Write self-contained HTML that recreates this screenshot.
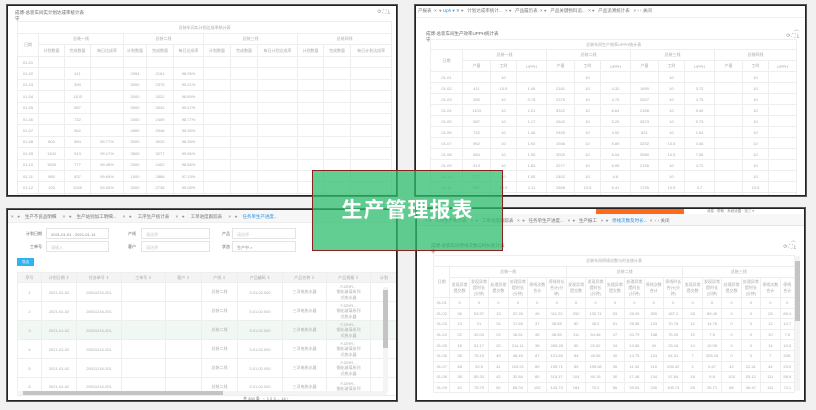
<!DOCTYPE html>
<html><head><meta charset="utf-8"><style>
*{margin:0;padding:0;box-sizing:border-box}
body{width:816px;height:410px;background:#f1f1f1;position:relative;overflow:hidden;font-family:"Liberation Sans","Noto Sans CJK SC",sans-serif;color:#999}
.p{position:absolute;background:#fff;border:1px solid #222;box-shadow:0 0 0 1px #555;overflow:hidden}
.a{position:absolute;white-space:nowrap}
table{border-collapse:collapse;table-layout:fixed;position:absolute;font-size:4px;color:#aaa}
td{border:1px solid #eee;text-align:center;overflow:hidden;white-space:nowrap}
.tab{position:absolute;font-size:4.5px;color:#777;white-space:nowrap}
.in{position:absolute;border:1px solid #e4e4e4;height:11px;font-size:4px;color:#ccc;padding:3px 4px}
#g{position:absolute;left:312px;top:170px;width:191px;height:81px;background:rgba(46,190,110,0.75);border:1px solid #8b2020;color:#fff;font-size:21px;font-weight:bold;text-align:center;line-height:79px;letter-spacing:1px;font-family:"Liberation Sans","Noto Sans CJK SC",sans-serif}
</style></head><body>

<!-- TL -->
<div class="p" style="left:7px;top:5px;width:390px;height:191px">
<div class="a" style="left:7px;top:4px;font-size:4.5px;color:#666">成博-总装车间实计划达成率统计表<br>守</div>
<div class="a" style="right:6px;top:3px;font-size:5px;color:#888">⟳ ⛶ ⤓</div>
<table style="left:9px;top:15px;width:374px">
<col style="width:21px"><col style="width:26px"><col style="width:26px"><col style="width:33px"><col style="width:23px"><col style="width:27px"><col style="width:30px"><col style="width:27px"><col style="width:27px"><col style="width:40px"><col style="width:26px"><col style="width:27px"><col style="width:41px">
<tr style="height:12px"><td colspan="13">总装车间实计划达成率统计表</td></tr>
<tr style="height:11px"><td rowspan="2">日期</td><td colspan="3">总装一线</td><td colspan="3">总装二线</td><td colspan="3">总装三线</td><td colspan="3">总装四线</td></tr>
<tr style="height:12px"><td>计划数量</td><td>完成数量</td><td>每日达成率</td><td>计划数量</td><td>完成数量</td><td>每日达成率</td><td>计划数量</td><td>完成数量</td><td>每日计划达成率</td><td>计划数量</td><td>完成数量</td><td>每日计划达成率</td></tr>
<tr style="height:11.4px"><td>01-01</td><td></td><td></td><td></td><td></td><td></td><td></td><td></td><td></td><td></td><td></td><td></td><td></td></tr>
<tr style="height:11.4px"><td>01-02</td><td></td><td>411</td><td></td><td>2054</td><td>2161</td><td>98.05%</td><td></td><td></td><td></td><td></td><td></td><td></td></tr>
<tr style="height:11.4px"><td>01-03</td><td></td><td>390</td><td></td><td>3000</td><td>2375</td><td>99.21%</td><td></td><td></td><td></td><td></td><td></td><td></td></tr>
<tr style="height:11.4px"><td>01-04</td><td></td><td>1103</td><td></td><td>3000</td><td>3322</td><td>98.89%</td><td></td><td></td><td></td><td></td><td></td><td></td></tr>
<tr style="height:11.4px"><td>01-05</td><td></td><td>587</td><td></td><td>5000</td><td>2642</td><td>99.47%</td><td></td><td></td><td></td><td></td><td></td><td></td></tr>
<tr style="height:11.4px"><td>01-06</td><td></td><td>732</td><td></td><td>2000</td><td>2459</td><td>98.77%</td><td></td><td></td><td></td><td></td><td></td><td></td></tr>
<tr style="height:11.4px"><td>01-07</td><td></td><td>962</td><td></td><td>4500</td><td>2946</td><td>99.35%</td><td></td><td></td><td></td><td></td><td></td><td></td></tr>
<tr style="height:11.4px"><td>01-08</td><td>800</td><td>584</td><td>59.77%</td><td>3000</td><td>3020</td><td>98.39%</td><td></td><td></td><td></td><td></td><td></td><td></td></tr>
<tr style="height:11.4px"><td>01-09</td><td>1100</td><td>913</td><td>99.17%</td><td>3500</td><td>3277</td><td>99.56%</td><td></td><td></td><td></td><td></td><td></td><td></td></tr>
<tr style="height:11.4px"><td>01-10</td><td>1500</td><td>777</td><td>99.48%</td><td>2000</td><td>2402</td><td>98.88%</td><td></td><td></td><td></td><td></td><td></td><td></td></tr>
<tr style="height:11.4px"><td>01-11</td><td>980</td><td>837</td><td>99.69%</td><td>1000</td><td>2868</td><td>97.13%</td><td></td><td></td><td></td><td></td><td></td><td></td></tr>
<tr style="height:11.4px"><td>01-12</td><td>100</td><td>1045</td><td>53.00%</td><td>3000</td><td>2738</td><td>99.08%</td><td></td><td></td><td></td><td></td><td></td><td></td></tr>
<tr style="height:11.4px"><td>01-13</td><td></td><td></td><td></td><td></td><td></td><td></td><td></td><td></td><td></td><td></td><td></td><td></td></tr>
</table>
</div>

<!-- TR -->
<div class="p" style="left:415px;top:5px;width:391px;height:191px">
<div class="tab" style="left:2px;top:2px">产报表 &nbsp;×&nbsp; ⌖ <span style="color:#2a8ee0">Uph ▾</span> ✕ ⌖ &nbsp; 计划达成率统计... &nbsp;× ⌖ &nbsp; 产品履历表 &nbsp;× ⌖ &nbsp; 产品关键物料追... &nbsp;× ⌖ &nbsp; 产品追溯统计表 &nbsp; × ‹ › 关闭</div>
<div class="a" style="left:0;top:11px;width:391px;border-top:1px solid #eee"></div>
<div class="a" style="left:10px;top:25px;font-size:4.5px;color:#666">成博-总装车间生产效率UPPH统计表<br>守</div>
<div class="a" style="right:6px;top:20px;font-size:5px;color:#888;text-align:right">︿<br>⟳ ⛶ ⤓</div>
<table style="left:14px;top:33px;width:366px">
<col style="width:32px"><col style="width:28px"><col style="width:26px"><col style="width:30px"><col style="width:28px"><col style="width:26px"><col style="width:30px"><col style="width:28px"><col style="width:26px"><col style="width:30px"><col style="width:28px"><col style="width:26px"><col style="width:28px">
<tr style="height:10px"><td colspan="13">总装车间生产效率UPPH统计表</td></tr>
<tr style="height:11px"><td rowspan="2">日期</td><td colspan="3">总装一线</td><td colspan="3">总装二线</td><td colspan="3">总装三线</td><td colspan="3">总装四线</td></tr>
<tr style="height:11px"><td>产量</td><td>工时</td><td>UPPH</td><td>产量</td><td>工时</td><td>UPPH</td><td>产量</td><td>工时</td><td>UPPH</td><td>产量</td><td>工时</td><td>UPPH</td></tr>
<tr style="height:11px"><td>01-01</td><td></td><td>10</td><td></td><td></td><td>10</td><td></td><td></td><td>10</td><td></td><td></td><td>10</td><td></td></tr>
<tr style="height:11px"><td>01-02</td><td>411</td><td>10.5</td><td>1.06</td><td>2161</td><td>10</td><td>4.32</td><td>1695</td><td>10</td><td>3.72</td><td></td><td>10</td><td></td></tr>
<tr style="height:11px"><td>01-03</td><td>390</td><td>10</td><td>0.78</td><td>2375</td><td>10</td><td>4.75</td><td>2547</td><td>10</td><td>4.75</td><td></td><td>10</td><td></td></tr>
<tr style="height:11px"><td>01-04</td><td>1103</td><td>10</td><td>2.21</td><td>3322</td><td>10</td><td>6.64</td><td>2166</td><td>10</td><td>5.40</td><td></td><td>10</td><td></td></tr>
<tr style="height:11px"><td>01-05</td><td>587</td><td>10</td><td>1.17</td><td>2642</td><td>10</td><td>5.20</td><td>2873</td><td>10</td><td>5.75</td><td></td><td>10</td><td></td></tr>
<tr style="height:11px"><td>01-06</td><td>732</td><td>10</td><td>1.46</td><td>2459</td><td>10</td><td>4.92</td><td>821</td><td>10</td><td>1.64</td><td></td><td>10</td><td></td></tr>
<tr style="height:11px"><td>01-07</td><td>962</td><td>10</td><td>1.92</td><td>2946</td><td>10</td><td>5.89</td><td>3252</td><td>10.5</td><td>3.46</td><td></td><td>10</td><td></td></tr>
<tr style="height:11px"><td>01-08</td><td>584</td><td>10</td><td>1.95</td><td>3020</td><td>10</td><td>6.04</td><td>3580</td><td>10.5</td><td>7.56</td><td></td><td>10</td><td></td></tr>
<tr style="height:11px"><td>01-09</td><td>913</td><td>10</td><td>1.83</td><td>3277</td><td>10</td><td>6.55</td><td>2195</td><td>10</td><td>4.72</td><td></td><td>10</td><td></td></tr>
<tr style="height:11px"><td>01-10</td><td>777</td><td>10</td><td>1.55</td><td>2402</td><td>10</td><td>4.8</td><td></td><td>10</td><td></td><td></td><td>10</td><td></td></tr>
<tr style="height:11px"><td>01-11</td><td>837</td><td>10.5</td><td>2.11</td><td>2868</td><td>10.5</td><td>6.41</td><td>1795</td><td>10.5</td><td>3.7</td><td></td><td>10.5</td><td></td></tr>
<tr style="height:11px"><td>01-12</td><td>1045</td><td>10</td><td>2.09</td><td>2758</td><td>10.5</td><td>6.10</td><td>1912</td><td>10</td><td>3.82</td><td></td><td>10</td><td></td></tr>
<tr style="height:11px"><td>01-13</td><td>721</td><td>10</td><td>1.47</td><td>2016</td><td>10</td><td>3.91</td><td>725</td><td>10</td><td>1.42</td><td></td><td>10</td><td></td></tr>
</table>
</div>

<!-- BL -->
<div class="p" style="left:7px;top:209px;width:390px;height:192px">
<div style="position:absolute;left:0;top:0;width:390px;height:13px;background:#f7f7f7;border-bottom:1px solid #eee"></div>
<div class="tab" style="left:3px;top:4px">× &nbsp; ⌖ &nbsp; &nbsp;生产不良品明细 &nbsp; &nbsp; × &nbsp; ⌖ &nbsp; &nbsp;生产站别加工明细... &nbsp; &nbsp; × &nbsp; ⌖ &nbsp; &nbsp; 工序生产统计表 &nbsp; &nbsp; × &nbsp; ⌖ &nbsp; &nbsp; 工单进度跟踪表 &nbsp; &nbsp; × &nbsp; ⌖ &nbsp; &nbsp;<span style="color:#2a8ee0">任务单生产进度...</span></div>
<div class="a" style="left:18px;top:21px;font-size:4px;color:#666">计划日期</div>
<div class="in" style="left:38px;top:18px;width:63px;color:#888">2021-01-01 - 2021-01-14</div>
<div class="a" style="left:120px;top:21px;font-size:4px;color:#666">产线</div>
<div class="in" style="left:133px;top:18px;width:69px">请选择</div>
<div class="a" style="left:214px;top:21px;font-size:4px;color:#666">产品</div>
<div class="in" style="left:224px;top:18px;width:64px">请选择</div>
<div class="a" style="left:22px;top:34px;font-size:4px;color:#666">工单号</div>
<div class="in" style="left:38px;top:31px;width:63px">请输入</div>
<div class="a" style="left:120px;top:34px;font-size:4px;color:#666">客户</div>
<div class="in" style="left:133px;top:31px;width:69px">请选择</div>
<div class="a" style="left:214px;top:34px;font-size:4px;color:#666">状态</div>
<div class="in" style="left:224px;top:31px;width:64px;color:#888">生产中 ×</div>
<div style="position:absolute;left:9px;top:48px;width:17px;height:8px;background:#2fb4f0;font-size:3.5px;color:#fff;text-align:center;line-height:8px">导出</div>
<table style="left:9px;top:62px;width:380px">
<col style="width:24px"><col style="width:35px"><col style="width:45px"><col style="width:44px"><col style="width:36px"><col style="width:36px"><col style="width:45px"><col style="width:44px"><col style="width:44px"><col style="width:27px">
<tr style="height:10px;background:#f4f4f4"><td>序号</td><td>计划日期 ⇕</td><td>任务单号 ⇕</td><td>工单号 ⇕</td><td>客户 ⇕</td><td>产线 ⇕</td><td>产品编码 ⇕</td><td>产品名称 ⇕</td><td>产品规格 ⇕</td><td>计划</td></tr>
<tr style="height:19px"><td>1</td><td>2021-01-02</td><td>20011216-201</td><td></td><td></td><td>总装二线</td><td>3.01.02.000</td><td>三洋电热水器</td><td>FJZHR...<br>钢化玻璃系列<br>式热水器</td><td></td></tr>
<tr style="height:19px"><td>2</td><td>2021-01-02</td><td>20011216-201</td><td></td><td></td><td>总装二线</td><td>3.01.02.000</td><td>三洋电热水器</td><td>FJZHR...<br>钢化玻璃系列<br>式热水器</td><td></td></tr>
<tr style="height:19px;background:#f1f8f4"><td>3</td><td>2021-01-02</td><td>20011216-201</td><td></td><td></td><td>总装二线</td><td>3.01.02.000</td><td>三洋电热水器</td><td>FJZHR...<br>钢化玻璃系列<br>式热水器</td><td></td></tr>
<tr style="height:19px"><td>4</td><td>2021-01-02</td><td>20011216-201</td><td></td><td></td><td>总装二线</td><td>3.01.02.000</td><td>三洋电热水器</td><td>FJZHR...<br>钢化玻璃系列<br>式热水器</td><td></td></tr>
<tr style="height:19px"><td>5</td><td>2021-01-02</td><td>20011216-201</td><td></td><td></td><td>总装二线</td><td>3.01.02.000</td><td>三洋电热水器</td><td>FJZHR...<br>钢化玻璃系列<br>式热水器</td><td></td></tr>
<tr style="height:18px"><td>6</td><td>2021-01-02</td><td>20011216-201</td><td></td><td></td><td>总装二线</td><td>3.01.02.000</td><td>三洋电热水器</td><td>FJZHR...<br>钢化玻璃系列</td><td></td></tr>
</table>
<div style="position:absolute;left:375px;top:77px;width:5px;height:104px;background:#f4f4f4"></div>
<div style="position:absolute;left:375px;top:80px;width:5px;height:58px;background:#c4c4c4"></div>
<div style="position:absolute;left:9px;top:181px;width:370px;height:4px;background:#f4f4f4"></div>
<div style="position:absolute;left:15px;top:181px;width:200px;height:4px;background:#c4c4c4"></div>
<div class="a" style="left:235px;top:186px;font-size:4px;color:#777">共 263 条 &nbsp; ‹ &nbsp;<span style="color:#2fb46e">1</span> 2 3 ... 14 ›</div>
</div>

<!-- BR -->
<div class="p" style="left:416px;top:208px;width:389px;height:193px">
<div style="position:absolute;left:179px;top:0;width:88px;height:5px;background:#ff6a1a"></div>
<div class="a" style="left:290px;top:0;font-size:3.5px;color:#888">消息 · 帮助 · 系统设置 · 张三 ▾</div>
<div style="position:absolute;left:0;top:5px;width:389px;height:12px;background:#f7f7f7;border-bottom:1px solid #e6e6e6"></div>
<div class="tab" style="left:8px;top:9px">× ⌖ &nbsp; 工序生产统计表 &nbsp; × &nbsp;⌖ &nbsp; 工单进度跟踪表 &nbsp; × &nbsp;⌖ &nbsp; 任务单生产进度... &nbsp; × &nbsp;⌖ &nbsp; 生产报工 &nbsp; × &nbsp;⌖ &nbsp; <span style="color:#2a8ee0">停线次数及时长...</span> &nbsp;× &nbsp;‹ › 关闭</div>
<div class="a" style="left:14px;top:34px;font-size:4.5px;color:#666">成博-总装车间停线次数与时长统计表<br>守</div>
<div class="a" style="right:8px;top:28px;font-size:5px;color:#888;text-align:right">︿<br>⟳ ⛶ ⤓</div>
<table style="left:16px;top:46px;width:362px">
<col style="width:16px"><col style="width:19px"><col style="width:19px"><col style="width:19px"><col style="width:19px"><col style="width:19px"><col style="width:19px"><col style="width:19px"><col style="width:19px"><col style="width:19px"><col style="width:19px"><col style="width:19px"><col style="width:19px"><col style="width:19px"><col style="width:19px"><col style="width:19px"><col style="width:19px"><col style="width:19px"><col style="width:14px">
<tr style="height:11px"><td colspan="19">总装车间停线次数与时长统计表</td></tr>
<tr style="height:11px"><td rowspan="2">日期</td><td colspan="6">总装一线</td><td colspan="6">总装二线</td><td colspan="6">总装三线</td></tr>
<tr style="height:20px"><td>发现异常<br>提交数</td><td>发现异常<br>提时长<br>(分钟)</td><td>处理异常<br>提交数</td><td>处理异常<br>提时长<br>(分钟)</td><td>停线次数<br>合计</td><td>停线时长<br>合计(分<br>钟)</td><td>发现异常<br>提交数</td><td>发现异常<br>提时长<br>(分钟)</td><td>处理异常<br>提交数</td><td>处理异常<br>提时长<br>(分钟)</td><td>停线次数<br>合计</td><td>停线时长<br>合计(分<br>钟)</td><td>发现异常<br>提交数</td><td>发现异常<br>提时长<br>(分钟)</td><td>处理异常<br>提交数</td><td>处理异常<br>提时长<br>(分钟)</td><td>停线次数<br>合计</td><td>停线<br>合计</td></tr>
<tr style="height:10.6px"><td>01-01</td><td>0</td><td>0</td><td>0</td><td>0</td><td>0</td><td>0</td><td>0</td><td>0</td><td>0</td><td>0</td><td>0</td><td>0</td><td>0</td><td>0</td><td>0</td><td>0</td><td>0</td><td>0</td></tr>
<tr style="height:10.6px"><td>01-02</td><td>36</td><td>53.97</td><td>13</td><td>57.26</td><td>49</td><td>111.23</td><td>252</td><td>130.71</td><td>53</td><td>26.49</td><td>305</td><td>187.2</td><td>28</td><td>89.49</td><td>0</td><td>0</td><td>28</td><td>89.4</td></tr>
<tr style="height:10.6px"><td>01-03</td><td>13</td><td>21</td><td>24</td><td>17.65</td><td>37</td><td>38.65</td><td>82</td><td>45.2</td><td>51</td><td>25.56</td><td>133</td><td>70.76</td><td>12</td><td>14.76</td><td>0</td><td>0</td><td>12</td><td>14.7</td></tr>
<tr style="height:10.6px"><td>01-04</td><td>22</td><td>32.04</td><td>23</td><td>16.51</td><td>45</td><td>48.55</td><td>111</td><td>54.46</td><td>47</td><td>20.79</td><td>158</td><td>75.25</td><td>10</td><td>7.5</td><td>0</td><td>0</td><td>10</td><td>7.5</td></tr>
<tr style="height:10.6px"><td>01-05</td><td>18</td><td>51.17</td><td>20</td><td>214.11</td><td>38</td><td>265.28</td><td>50</td><td>22.62</td><td>34</td><td>10.56</td><td>34</td><td>33.18</td><td>14</td><td>10.05</td><td>0</td><td>0</td><td>14</td><td>10.0</td></tr>
<tr style="height:10.6px"><td>01-06</td><td>38</td><td>75.15</td><td>49</td><td>46.49</td><td>87</td><td>121.65</td><td>84</td><td>49.56</td><td>40</td><td>14.75</td><td>124</td><td>64.31</td><td>7</td><td>328.16</td><td>0</td><td>0</td><td>7</td><td>328.</td></tr>
<tr style="height:10.6px"><td>01-07</td><td>48</td><td>92.5</td><td>41</td><td>103.21</td><td>89</td><td>195.71</td><td>89</td><td>195.08</td><td>26</td><td>11.34</td><td>115</td><td>206.42</td><td>2</td><td>0.67</td><td>42</td><td>22.41</td><td>44</td><td>23.0</td></tr>
<tr style="height:10.6px"><td>01-08</td><td>38</td><td>85.33</td><td>42</td><td>32.84</td><td>80</td><td>115.17</td><td>104</td><td>40.15</td><td>30</td><td>17.48</td><td>134</td><td>57.84</td><td>18</td><td>5.8</td><td>103</td><td>53.12</td><td>111</td><td>58.9</td></tr>
<tr style="height:10.6px"><td>01-09</td><td>42</td><td>75.79</td><td>60</td><td>65.04</td><td>102</td><td>143.73</td><td>184</td><td>70.2</td><td>56</td><td>39.54</td><td>240</td><td>109.74</td><td>25</td><td>26.71</td><td>86</td><td>46.47</td><td>111</td><td>73.1</td></tr>
</table>
<div style="position:absolute;left:378px;top:47px;width:5px;height:135px;background:#f4f4f4"></div>
<div style="position:absolute;left:378px;top:52px;width:5px;height:60px;background:#c4c4c4"></div>
</div>

<div id="g">生产管理报表</div>
</body></html>
